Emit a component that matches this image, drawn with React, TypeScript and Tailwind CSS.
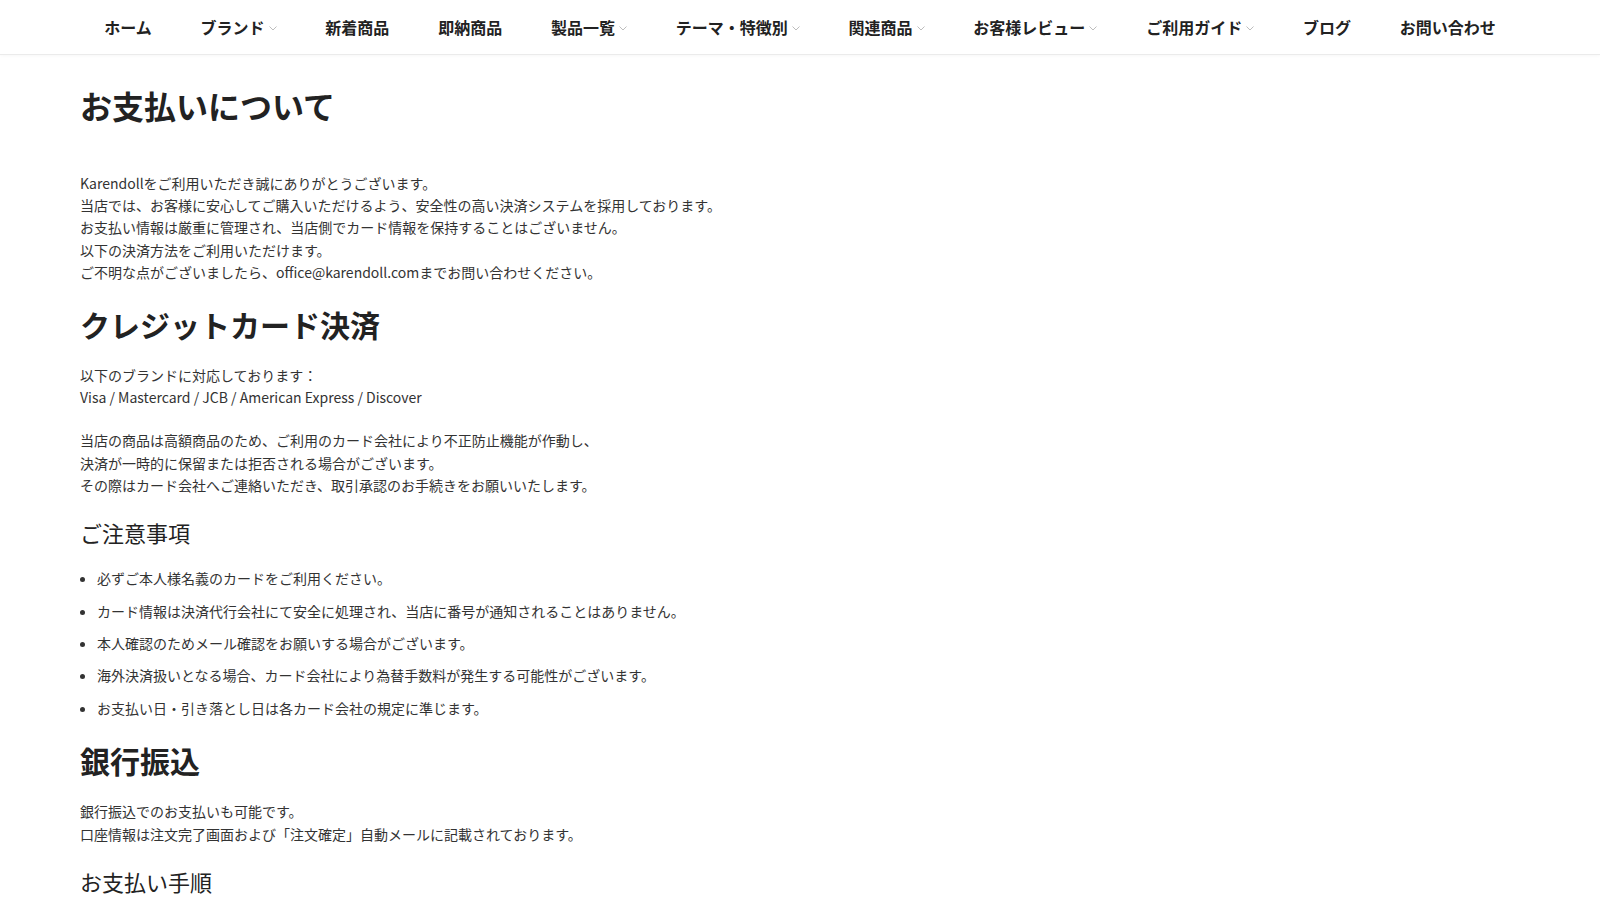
const navItems: { label: string; dropdown?: boolean }[] = [
  { label: "ホーム" },
  { label: "ブランド", dropdown: true },
  { label: "新着商品" },
  { label: "即納商品" },
  { label: "製品一覧", dropdown: true },
  { label: "テーマ・特徴別", dropdown: true },
  { label: "関連商品", dropdown: true },
  { label: "お客様レビュー", dropdown: true },
  { label: "ご利用ガイド", dropdown: true },
  { label: "ブログ" },
  { label: "お問い合わせ" },
]

const cautions = [
  "必ずご本人様名義のカードをご利用ください。",
  "カード情報は決済代行会社にて安全に処理され、当店に番号が通知されることはありません。",
  "本人確認のためメール確認をお願いする場合がございます。",
  "海外決済扱いとなる場合、カード会社により為替手数料が発生する可能性がございます。",
  "お支払い日・引き落とし日は各カード会社の規定に準じます。",
]

function Chevron() {
  return (
    <svg width="8" height="5" viewBox="0 0 8 5" fill="none" className="ml-[4px] mt-[2px]">
      <path d="M0.5 0.5L4 4L7.5 0.5" stroke="#b5b5b5" strokeWidth="0.9" />
    </svg>
  )
}

export default function App() {
  return (
    <div
      className="min-h-screen bg-white text-[#333]"
      style={{ fontFamily: '"Noto Sans CJK JP", "Noto Sans", sans-serif' }}
    >
      <header className="h-[55px] border-b border-[#ebebeb] shadow-[0_1px_3px_rgba(0,0,0,0.03)]">
        <nav className="flex h-full items-center justify-center">
          {navItems.map((item) => (
            <a
              key={item.label}
              className="flex items-center px-[24.4px] text-[16px] font-bold leading-none text-[#222]"
            >
              <span>{item.label}</span>
              {item.dropdown && <Chevron />}
            </a>
          ))}
        </nav>
      </header>

      <main className="px-[80px] pt-[30px] text-[14px] leading-[1.6]">
        <h1 className="mb-[45px] text-[32px] font-bold leading-[1.3] text-[#222]">お支払いについて</h1>

        <p className="mb-[21px]">
          Karendollをご利用いただき誠にありがとうございます。
          <br />
          当店では、お客様に安心してご購入いただけるよう、安全性の高い決済システムを採用しております。
          <br />
          お支払い情報は厳重に管理され、当店側でカード情報を保持することはございません。
          <br />
          以下の決済方法をご利用いただけます。
          <br />
          ご不明な点がございましたら、office@karendoll.comまでお問い合わせください。
        </p>

        <h2 className="mb-[20px] text-[30px] font-bold leading-[1.3] text-[#222]">クレジットカード決済</h2>

        <p className="mb-[21px]">
          以下のブランドに対応しております：
          <br />
          Visa / Mastercard / JCB / American Express / Discover
        </p>

        <p className="mb-[20px]">
          当店の商品は高額商品のため、ご利用のカード会社により不正防止機能が作動し、
          <br />
          決済が一時的に保留または拒否される場合がございます。
          <br />
          その際はカード会社へご連絡いただき、取引承認のお手続きをお願いいたします。
        </p>

        <h3 className="mb-[20px] text-[22px] font-normal leading-[1.4] text-[#222]">ご注意事項</h3>

        <ul className="mb-[22px] flex list-disc flex-col gap-[10px] pl-[17px]">
          {cautions.map((c) => (
            <li key={c}>{c}</li>
          ))}
        </ul>

        <h2 className="mb-[20px] text-[30px] font-bold leading-[1.3] text-[#222]">銀行振込</h2>

        <p className="mb-[21px]">
          銀行振込でのお支払いも可能です。
          <br />
          口座情報は注文完了画面および「注文確定」自動メールに記載されております。
        </p>

        <h3 className="mb-[20px] text-[22px] font-normal leading-[1.4] text-[#222]">お支払い手順</h3>
      </main>
    </div>
  )
}
